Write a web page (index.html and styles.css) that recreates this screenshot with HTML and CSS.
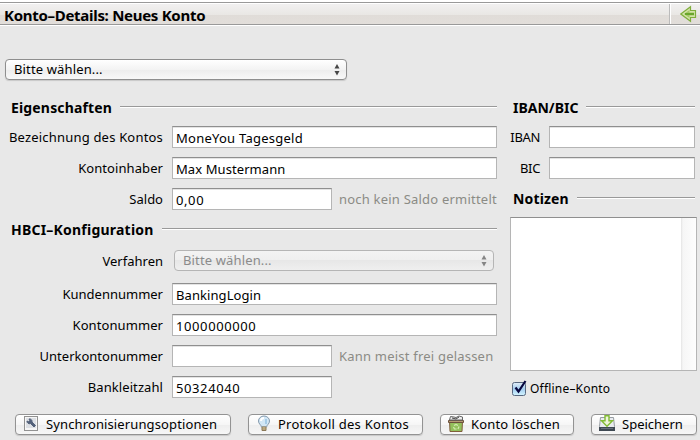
FILE: index.html
```html
<!DOCTYPE html>
<html lang="de">
<head>
<meta charset="utf-8">
<title>Konto-Details: Neues Konto</title>
<link rel="stylesheet" href="styles.css">
</head>
<body>
<header class="titlebar">
  <h1 class="title">Konto–Details: Neues Konto</h1>
  <div class="back">
    <svg width="18" height="20" viewBox="0 0 18 20"><path d="M.8 10 10.500 2.800V6.500H15.500v7H10.500v3.700z" fill="#d3e3a9" stroke="#7fae3c" stroke-width="1.200"/><path d="M4 10 9.500 6v2.500h4.500v3H9.500V14z" fill="#a5c866"/><path d="M5 10h9" stroke="#69a62c" stroke-width="2"/></svg>
  </div>
</header>
<div class="picker"><div class="select"><span class="t-select">Bitte wählen...</span><svg class="arrows" width="6" height="12" viewBox="0 0 6 12"><path d="M3 0 5.500 4.500h-5zM3 11.500 5.500 7h-5z"/></svg></div></div>
<main class="columns">
  <section class="main-col">
    <h2 class="heading"><span class="h-eig">Eigenschaften</span></h2>
    <div class="row"><label class="l-bez">Bezeichnung des Kontos</label><div class="input"><span class="v-money">MoneYou Tagesgeld</span></div></div>
    <div class="row"><label class="l-inh">Kontoinhaber</label><div class="input"><span class="v-max">Max Mustermann</span></div></div>
    <div class="row"><label class="l-saldo">Saldo</label><div class="input short"><span class="v-num">0,00</span></div><span class="hint">noch kein Saldo ermittelt</span></div>
    <h2 class="heading hbci"><span class="h-hbci">HBCI–Konfiguration</span></h2>
    <div class="row tall"><label class="l-verf">Verfahren</label><div class="select disabled"><span class="t-select">Bitte wählen...</span><svg class="arrows" width="6" height="12" viewBox="0 0 6 12"><path d="M3 0 5.500 4.500h-5zM3 11.500 5.500 7h-5z"/></svg></div></div>
    <div class="row"><label class="l-kund">Kundennummer</label><div class="input"><span class="v-max">BankingLogin</span></div></div>
    <div class="row"><label class="l-inh">Kontonummer</label><div class="input"><span class="v-num">1000000000</span></div></div>
    <div class="row"><label class="l-unter">Unterkontonummer</label><div class="input short"></div><span class="hint">Kann meist frei gelassen</span></div>
    <div class="row"><label class="l-inh">Bankleitzahl</label><div class="input short"><span class="v-num">50324040</span></div></div>
  </section>
  <section class="side-col">
    <h2 class="heading"><span class="h-iban">IBAN/BIC</span></h2>
    <div class="row"><label>IBAN</label><div class="input"></div></div>
    <div class="row"><label>BIC</label><div class="input"></div></div>
    <h2 class="heading notes-heading"><span class="h-not">Notizen</span></h2>
    <div class="notes"><div class="scroll"></div></div>
    <div class="check"><svg width="17" height="18" viewBox="0 0 17 18"><defs><linearGradient id="cb" x2="0" y2="1"><stop stop-color="#e3eef8"/><stop offset=".5" stop-color="#a4cdf0"/><stop offset="1" stop-color="#d4f5ff"/></linearGradient></defs><rect x="1.500" y="3.500" width="13" height="13" rx="2" fill="url(#cb)" stroke="#586880"/><path d="M4.500 8.500 7.500 12.500 14.500 2" fill="none" stroke="#07073f" stroke-width="2.200"/></svg><span class="t-off">Offline–Konto</span></div>
  </section>
</main>
<footer class="buttons">
  <div class="button b-sync"><svg width="16" height="18" viewBox="0 0 16 18"><rect x="1.500" y="1.500" width="13" height="14" fill="#f6f6f6" stroke="#929292"/><rect x="3" y="3" width="10" height="10" fill="#dde0e5"/><path d="M4 6a2.500 2.500 0 0 0 3.500 2.500L11 12l1.500-1.500L9 7A2.500 2.500 0 0 0 6 4l1 2-1 1z" fill="#53617a" stroke="#53617a"/></svg><span class="t-sync">Synchronisierungsoptionen</span></div>
  <div class="button b-prot"><svg width="16" height="18" viewBox="0 0 16 18"><path d="M5.500 12C5 9.500 2.500 9 2.500 6a5.500 5 0 0 1 11 0c0 3-2.500 3.500-3 6z" fill="#d2e7f6" stroke="#8499ac"/><path d="M5 6a3 3 0 0 1 3-3" stroke="#fff" stroke-width="2" fill="none"/><path d="M10 4v5" stroke="#a5cbe7" stroke-width="2"/><path d="M6 12h4v3.500H6z" fill="#e9d9ab" stroke="#8b7857"/><path d="M6 14h4" stroke="#8b7857"/></svg><span class="t-prot">Protokoll des Kontos</span></div>
  <div class="button b-del"><svg width="18" height="18" viewBox="0 0 18 18"><path d="M2.500 5.500h13l-.5 11H3z" fill="#93c05c" stroke="#805f3b"/><path d="M1.500 5.500h15v2h-15z" fill="#b59a72" stroke="#6b513c"/><path d="M2.500 5 3.500 1.500 7 2l2 .5 3-1.500 3.500 1v3z" fill="#eee" stroke="#666"/><path d="m5 3 4 1 3-2" stroke="#444" fill="none"/><path d="m7 10.500 2-1 2 1M6.500 12l1 2h2M12 11.500l-1 2.500" fill="none" stroke="#d3ecb0" stroke-width="1.200"/></svg><span class="t-del">Konto löschen</span></div>
  <div class="button b-save"><svg width="18" height="18" viewBox="0 0 18 18"><path d="M2.500 2.500h13l1 9v4h-15v-4z" fill="#e9ecef" stroke="#979da2"/><path d="M1 12h16v4H1z" fill="#3f4953"/><path d="M3 13.500h12" stroke="#66717b"/><path d="M7 .8h4v5h3.500L9 11.300 3.500 5.800H7z" fill="#eef6da" stroke="#82bb34" stroke-width="1.400"/></svg><span>Speichern</span></div>
</footer>
</body>
</html>
```
FILE: styles.css
```css
* { box-sizing: border-box; }
body { margin: 0; width: 700px; height: 440px; overflow: hidden; background: #e8e8e8; color: #000; font: 13px/22px "Noto Sans", "Open Sans", sans-serif; white-space: nowrap; }
h1, h2 { margin: 0; }
svg { display: block; flex: none; }
.titlebar { height: 26px; display: flex; border-top: 2px solid #fff; border-bottom: 1px solid #fff; background: linear-gradient(#999 0 1px, #fff 1px 2px, #f1f0f0 2px, #e9e7e4 13px, #e0dcd8 13px, #e2deda 22px, #999 22px); }
.title { flex: 1; padding-left: 4px; font-size: 15px; line-height: 26px; font-weight: 700; letter-spacing: -.29px; }
.back { width: 31px; margin: 2px 0 1px; padding-left: 10px; border-left: 1px solid #bbb; box-shadow: inset 1px 0 #fff; }
.picker { padding: 33px 0 0 5px; height: 67px; }
.select { width: 342px; height: 21px; border: 1px solid #8e8e8e; border-radius: 4px; background: linear-gradient(#fff, #f3f3f3 50%, #ececec 50%, #f8f8f8); box-shadow: 0 1px 1px #c8c8c8; display: flex; justify-content: space-between; align-items: center; padding: 0 6px 0 8px; line-height: 19px; }
.arrows { fill: #454545; }
.disabled { width: 320px; margin-left: 2px; border-color: #b5b5b5; background: linear-gradient(#f3f3f3, #efefef 50%, #e7e7e7 50%, #efefef); box-shadow: none; color: #8b8b8b; }
.disabled .arrows { fill: #858585; }
.columns { display: flex; height: 321px; }
.main-col { width: 497px; }
.side-col { width: 199px; padding-left: 13px; }
.heading { height: 29px; padding-left: 11px; display: flex; gap: 8px; font-size: 14px; line-height: 30px; font-weight: 700; }
.heading::after { content: ""; flex: 1; height: 2px; margin-top: 13px; background: linear-gradient(#999 50%, #fff 50%); }
.hbci { height: 31px; }
.side-col .heading { padding-left: 3px; padding-right: 1px; }
.row { height: 31px; padding-top: 4px; display: flex; align-items: flex-start; }
.tall { height: 33px; }
.row label { width: 172px; padding-right: 9px; text-align: right; }
.side-col .row { padding-right: 1px; }
.side-col .row label { width: 39px; padding-right: 9px; letter-spacing: -.35px; }
.input { flex: 1; height: 22px; border: 1px solid #b5b5b5; border-top-color: #8f8f8f; background: #fff; box-shadow: inset 0 1px #e4e4e4; padding-left: 3px; line-height: 22px; }
.short { flex: none; width: 160px; }
.hint { padding-left: 7px; color: #8b8b85; letter-spacing: .21px; }
.side-col .notes-heading { height: 33px; }
.notes { width: 187px; height: 154px; border: 1px solid #b5b5b5; border-top-color: #8f8f8f; background: #fff; display: flex; justify-content: flex-end; }
.scroll { width: 15px; background: linear-gradient(90deg, #e4e4e4, #f6f6f6 2px, #fdfdfd); }
.check { display: flex; padding-top: 8px; margin-left: 1px; gap: 2px; line-height: 20px; font-size: 12px; }
.buttons { display: flex; gap: 17px; padding-left: 15px; }
.button { height: 21px; border: 1px solid #939393; border-radius: 4px; background: linear-gradient(#fff, #f6f6f6 50%, #ededed 50%, #f7f7f7); box-shadow: 0 1px 1px #c8c8c8; display: flex; line-height: 19px; }
.b-sync { width: 216px; padding-left: 7px; gap: 7px; }
.b-prot { width: 175px; padding-left: 7px; gap: 6px; }
.b-del { width: 134px; padding-left: 6px; gap: 6px; }
.b-save { width: 106px; padding-left: 6px; gap: 6px; }

/* Letter spacing per text */
.t-select { letter-spacing: .14px; }
.h-eig { letter-spacing: .16px; }
.h-hbci { letter-spacing: .22px; }
.h-not { letter-spacing: .14px; }
.l-bez { letter-spacing: .19px; }
.l-inh { letter-spacing: .08px; }
.v-money { letter-spacing: .25px; }
.v-max { letter-spacing: .08px; }
.v-num { letter-spacing: .6px; }
.t-off { letter-spacing: .2px; }
.t-sync { letter-spacing: .12px; }
.t-prot { letter-spacing: .25px; }
.t-del { letter-spacing: .15px; }
```
